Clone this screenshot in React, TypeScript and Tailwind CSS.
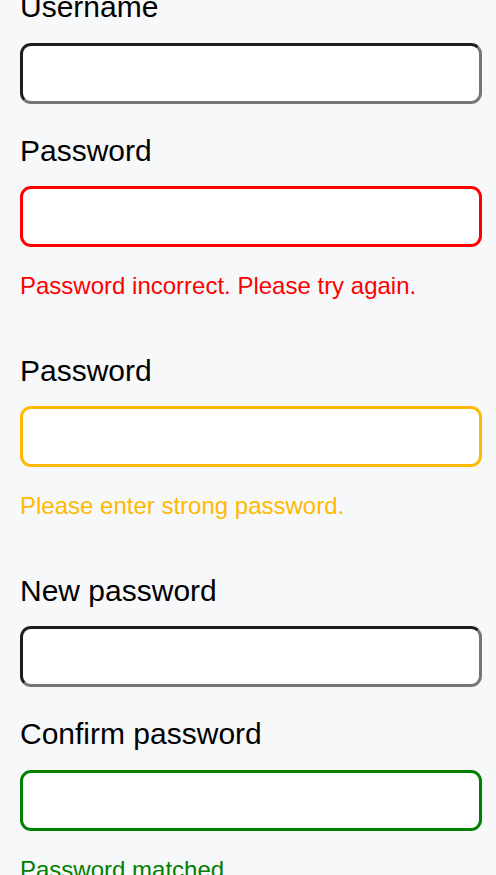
import React from "react";

function Field({
  label,
  borderClass,
  message,
  messageClass,
}: {
  label: string;
  borderClass: string;
  message?: string;
  messageClass?: string;
}) {
  return (
    <div className="flex flex-col">
      <label className="text-[30px] leading-[34.5px] text-black mb-[18px]">{label}</label>
      <input
        type="text"
        className={`w-[462px] h-[61px] bg-white rounded-[11px] border-[3px] outline-none ${borderClass}`}
      />
      {message ? (
        <div className={`text-[24px] leading-[27.6px] mt-[25px] mb-[24px] ${messageClass}`}>{message}</div>
      ) : null}
    </div>
  );
}

const neutral = "border-t-[#1e1e1e] border-l-[#1e1e1e] border-b-[#767676] border-r-[#767676]";

export default function App() {
  return (
    <div
      className="min-h-screen bg-[#f7f8fa] overflow-hidden"
      style={{ fontFamily: '"Liberation Sans", Arial, sans-serif' }}
    >
      <div className="px-[20px] -mt-[10px] flex flex-col gap-[30px]">
        <Field label="Username" borderClass={neutral} />
        <Field
          label="Password"
          borderClass="border-[#ff0000]"
          message="Password incorrect. Please try again."
          messageClass="text-[#ff0000]"
        />
        <Field
          label="Password"
          borderClass="border-[#ffb900]"
          message="Please enter strong password."
          messageClass="text-[#ffb900]"
        />
        <Field label="New password" borderClass={neutral} />
        <Field
          label="Confirm password"
          borderClass="border-[#008000]"
          message="Password matched"
          messageClass="text-[#008000]"
        />
      </div>
    </div>
  );
}
